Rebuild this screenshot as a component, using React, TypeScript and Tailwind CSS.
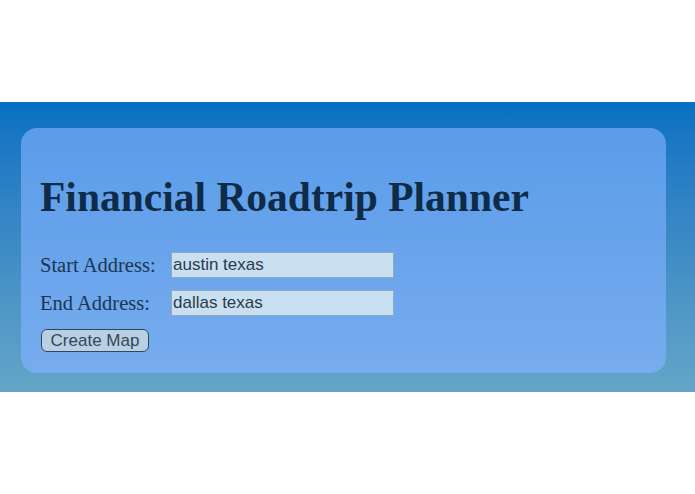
export default function App() {
  const serif = { fontFamily: '"Liberation Serif", "Times New Roman", serif' };
  const sans = { fontFamily: '"Liberation Sans", Arial, sans-serif' };
  return (
    <div className="min-h-[494px] w-full bg-white">
      <div className="h-[102px]" />
      <section className="h-[290px] bg-gradient-to-b from-[#0570c1] to-[#64a6c8] px-[21px] pt-[26px]">
        <div className="h-[245px] w-[645px] rounded-[16px] bg-gradient-to-b from-[#5a9ce9] to-[#77acee] pl-[19px] pt-[46px]">
          <h1 className="m-0 text-[41.5px] font-bold leading-[47px] text-[#0f2b47]" style={serif}>
            Financial Roadtrip Planner
          </h1>
          <form className="mt-[31px] flex flex-col">
            <div className="grid grid-cols-[131px_223px] gap-y-[12px]">
              <label className="flex h-[26px] items-center text-[20.5px] leading-[26px] text-[#1b3652]" style={serif}>
                Start Address:
              </label>
              <input
                defaultValue="austin texas"
                className="h-[26px] border border-[#8fa9bd] bg-[#c8e0f1] px-[1px] text-[17px] leading-[24px] text-[#2c3b4a] outline-none"
                style={sans}
              />
              <label className="flex h-[26px] items-center text-[20.5px] leading-[26px] text-[#1b3652]" style={serif}>
                End Address:
              </label>
              <input
                defaultValue="dallas texas"
                className="h-[26px] border border-[#8fa9bd] bg-[#c8e0f1] px-[1px] text-[17px] leading-[24px] text-[#2c3b4a] outline-none"
                style={sans}
              />
            </div>
            <div className="mt-[13px] flex">
              <button
                type="button"
                className="ml-[1px] h-[23px] w-[108px] rounded-[6px] border-[1.5px] border-[#2a4866] bg-[#b9d0e2] text-[17px] leading-[20px] text-[#34475a]"
                style={sans}
              >
                Create Map
              </button>
            </div>
          </form>
        </div>
      </section>
    </div>
  );
}
